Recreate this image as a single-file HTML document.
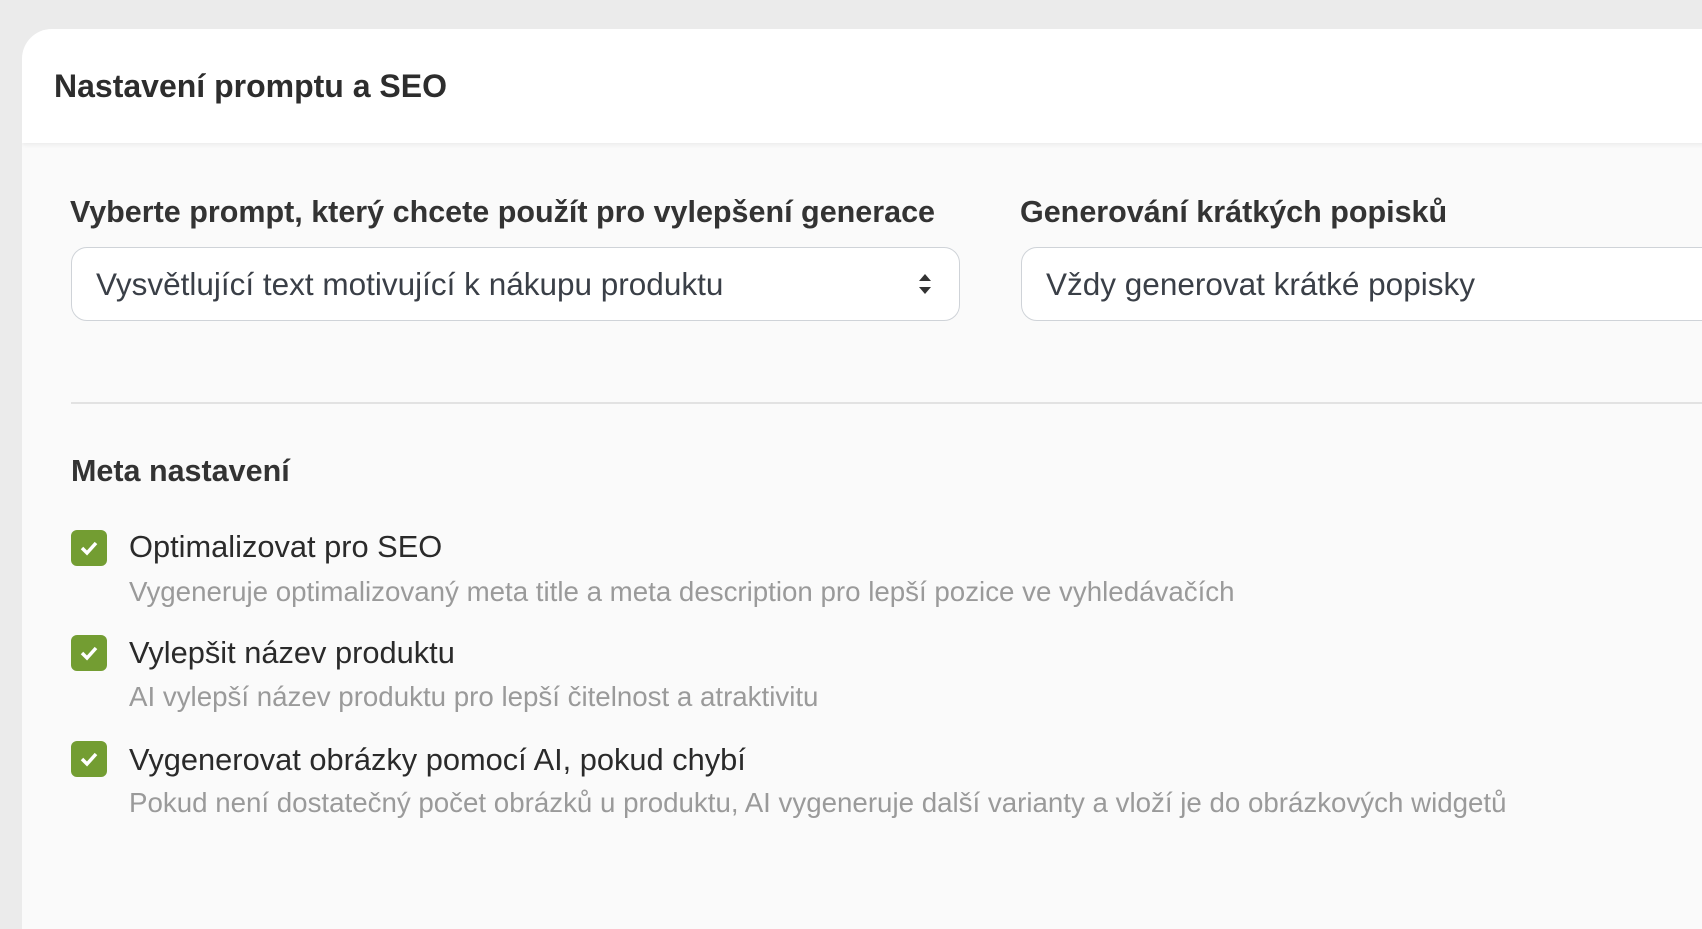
<!DOCTYPE html>
<html><head><meta charset="utf-8"><style>
*{box-sizing:border-box;margin:0;padding:0}
body{width:1702px;height:856px;overflow:hidden;background:#ebebeb;font-family:"Liberation Sans",sans-serif;position:relative}
.card{position:absolute;left:22px;top:29px;width:1720px;height:900px;background:#fafafa;border-radius:30px 0 0 0;overflow:hidden}
.hdr{position:absolute;left:0;top:0;right:0;height:114px;background:#fff;box-shadow:0 2px 4px rgba(0,0,0,.06)}
.hdr h1{position:absolute;left:32px;top:41px;font-size:32px;line-height:32px;font-weight:bold;color:#2d2d2d}
.lbl{position:absolute;font-size:30.5px;line-height:30px;font-weight:bold;color:#333;white-space:nowrap}
.sel{position:absolute;height:74px;border:1.5px solid #cfd3d8;border-radius:16px;background:#fff;font-size:31.5px;line-height:32px;color:#3a3f47;padding:20px 0 0 24px;white-space:nowrap}
.div{position:absolute;left:49px;right:0;top:373px;height:2px;background:#e2e2e2}
.cb{position:absolute;left:49px;width:36px;height:36px;border-radius:6px;background:#739d32}
.cb svg{position:absolute;left:9px;top:10px}
.t{position:absolute;left:107px;font-size:30.8px;line-height:30px;color:#2a2a2a;white-space:nowrap}
.d{position:absolute;left:107px;font-size:27.7px;line-height:28px;color:#9a9a9a;white-space:nowrap}
</style></head><body>
<div class="card">
<div class="hdr"><h1>Nastavení promptu a SEO</h1></div>
<div class="lbl" style="left:48px;top:168px">Vyberte prompt, který chcete použít pro vylepšení generace</div>
<div class="lbl" style="left:998px;top:168px">Generování krátkých popisků</div>
<div class="sel" style="left:49px;top:218px;width:889px">Vysvětlující text motivující k nákupu produktu
<svg style="position:absolute;left:846px;top:24px" width="14" height="24" viewBox="0 0 14 24"><path d="M7 2 L13 9 H1 Z M7 22 L13 15 H1 Z" fill="#333"/></svg></div>
<div class="sel" style="left:999px;top:218px;width:800px">Vždy generovat krátké popisky</div>
<div class="div"></div>
<div class="lbl" style="left:49px;top:427px">Meta nastavení</div>
<div class="cb" style="top:501px"><svg width="18" height="16" viewBox="0 0 18 16"><path d="M2 8 L7 13 L16 3" stroke="#fff" stroke-width="3.5" fill="none"/></svg></div>
<div class="t" style="top:503px">Optimalizovat pro SEO</div>
<div class="d" style="top:549px">Vygeneruje optimalizovaný meta title a meta description pro lepší pozice ve vyhledávačích</div>
<div class="cb" style="top:606px"><svg width="18" height="16" viewBox="0 0 18 16"><path d="M2 8 L7 13 L16 3" stroke="#fff" stroke-width="3.5" fill="none"/></svg></div>
<div class="t" style="top:609px">Vylepšit název produktu</div>
<div class="d" style="top:654px">AI vylepší název produktu pro lepší čitelnost a atraktivitu</div>
<div class="cb" style="top:712px"><svg width="18" height="16" viewBox="0 0 18 16"><path d="M2 8 L7 13 L16 3" stroke="#fff" stroke-width="3.5" fill="none"/></svg></div>
<div class="t" style="top:716px">Vygenerovat obrázky pomocí AI, pokud chybí</div>
<div class="d" style="top:760px">Pokud není dostatečný počet obrázků u produktu, AI vygeneruje další varianty a vloží je do obrázkových widgetů</div>
</div>
</body></html>
